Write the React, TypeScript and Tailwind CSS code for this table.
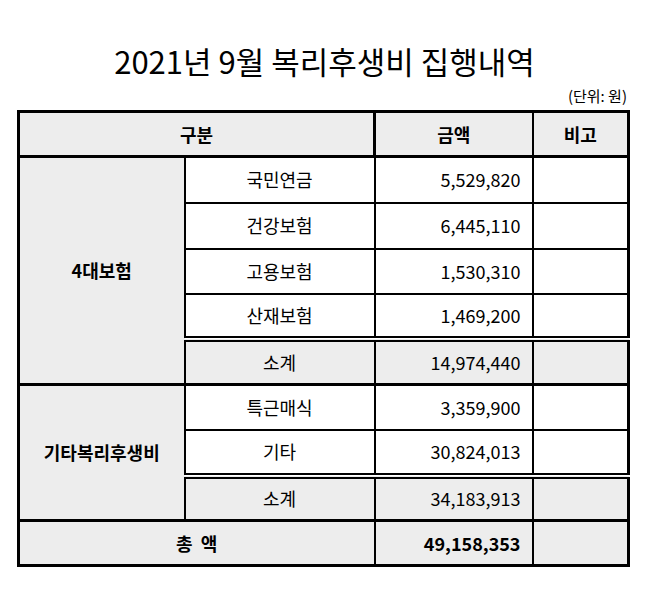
import React from "react"

const font = { fontFamily: '"Noto Sans CJK KR", "Noto Sans", sans-serif' }

type Item = { name: string; amount: string }

const insurance: Item[] = [
    { name: "국민연금", amount: "5,529,820" },
    { name: "건강보험", amount: "6,445,110" },
    { name: "고용보험", amount: "1,530,310" },
    { name: "산재보험", amount: "1,469,200" },
]

const welfare: Item[] = [
    { name: "특근매식", amount: "3,359,900" },
    { name: "기타", amount: "30,824,013" },
]

const cell = "border-2 border-black text-[18px] text-black"
const gray = "bg-[#ededed]"
// subtotal rows sit under a double rule
const sub = "border-t-[6px] [border-top-style:double] border-b-[3px]"

function Group({ label, items, subtotal, heights }: { label: string; items: Item[]; subtotal: string; heights: string[] }) {
    return (
        <>
            {items.map((it, i) => (
                <tr key={it.name} className={heights[i]}>
                    {i === 0 && (
                        <td
                            rowSpan={items.length + 1}
                            className={`${cell} ${gray} border-t-[3px] border-b-[3px] text-center font-bold`}
                        >
                            {label}
                        </td>
                    )}
                    <td className={`${cell} text-center ${i === 0 ? "border-t-[3px]" : ""}`}>{it.name}</td>
                    <td className={`${cell} text-right pr-[11px] ${i === 0 ? "border-t-[3px]" : ""}`}>{it.amount}</td>
                    <td className={`${cell} ${i === 0 ? "border-t-[3px]" : ""}`}></td>
                </tr>
            ))}
            <tr className={heights[items.length]}>
                <td className={`${cell} ${gray} ${sub} text-center`}>소계</td>
                <td className={`${cell} ${gray} ${sub} text-right pr-[11px]`}>{subtotal}</td>
                <td className={`${cell} ${gray} ${sub}`}></td>
            </tr>
        </>
    )
}

export default function App() {
    return (
        <div className="w-[649px] h-[597px] bg-white" style={font}>
            <h1 className="pt-[41px] text-center text-[31px] leading-[40px] text-black font-normal">
                2021년 9월 복리후생비 집행내역
            </h1>
            <div className="w-[613px] ml-[17px]">
                <p className="text-right text-[15px] leading-[20px] pr-[3px] mt-[5px] mb-[4px] text-black">(단위: 원)</p>
                <table className="w-[613px] table-fixed border-collapse border-[3px] border-black">
                    <colgroup>
                        <col className="w-[166px]" />
                        <col className="w-[190px]" />
                        <col className="w-[158px]" />
                        <col className="w-[96px]" />
                    </colgroup>
                    <tbody>
                        <tr className="h-[45px]">
                            <td colSpan={2} className={`${cell} ${gray} border-[3px] text-center font-bold`}>구분</td>
                            <td className={`${cell} ${gray} border-t-[3px] border-b-[3px] text-center font-bold`}>금액</td>
                            <td className={`${cell} ${gray} border-t-[3px] border-b-[3px] text-center font-bold`}>비고</td>
                        </tr>
                        <Group
                            label="4대보험"
                            items={insurance}
                            subtotal="14,974,440"
                            heights={["h-[46px]", "h-[46px]", "h-[45px]", "h-[45px]", "h-[46px]"]}
                        />
                        <Group
                            label="기타복리후생비"
                            items={welfare}
                            subtotal="34,183,913"
                            heights={["h-[45px]", "h-[46px]", "h-[45px]"]}
                        />
                        <tr className="h-[45px]">
                            <td colSpan={2} className={`${cell} ${gray} border-t-[3px] text-center font-bold`}>
                                총&nbsp;&nbsp;액
                            </td>
                            <td className={`${cell} ${gray} border-t-[3px] text-right pr-[11px] font-bold`}>49,158,353</td>
                            <td className={`${cell} ${gray} border-t-[3px]`}></td>
                        </tr>
                    </tbody>
                </table>
            </div>
        </div>
    )
}
